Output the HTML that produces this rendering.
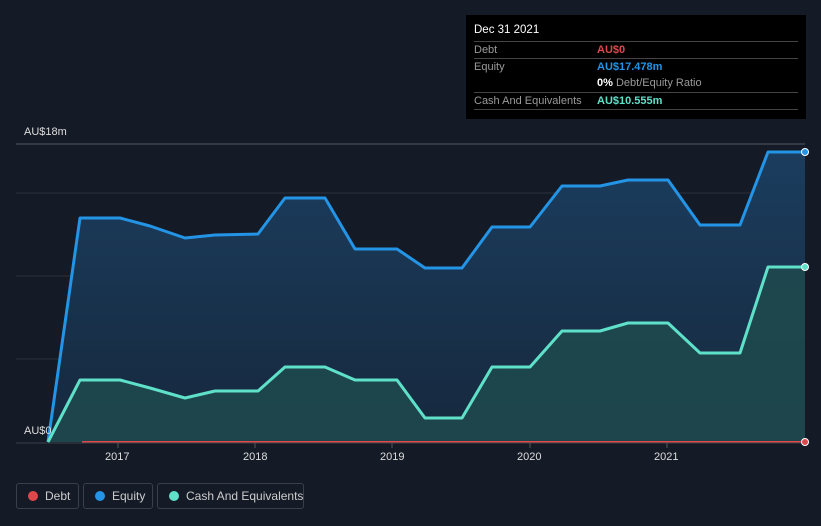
<!DOCTYPE html>
<html><head><style>
body{margin:0;width:821px;height:526px;background:#151b26;font-family:"Liberation Sans",sans-serif;overflow:hidden;position:relative}
.tip{position:absolute;left:466px;top:15px;width:340px;height:104px;background:#000;color:#fff;font-size:11px}
.tip .h{position:absolute;left:8px;top:9px;font-size:11.5px}
.row{position:absolute;left:8px;width:324px;border-top:1px solid #444;height:17px}
.row span{position:absolute;top:2px;white-space:nowrap}
.l{left:0;color:#9a9a9a}.v{left:123px;font-weight:bold}
.leg{position:absolute;top:483px;height:26px;border:1px solid #3a404a;border-radius:3px;color:#ccc;font-size:12px;line-height:24px;box-sizing:border-box;white-space:nowrap}
.leg i{position:absolute;left:11px;top:7px;width:10px;height:10px;border-radius:50%}
.leg span{position:absolute;left:28px}
.ax{position:absolute;color:#ddd;font-size:11px}
</style></head><body>
<svg width="821" height="526" style="position:absolute;left:0;top:0">
<defs>
<linearGradient id="ge" x1="0" y1="0" x2="0" y2="1"><stop offset="0" stop-color="#1b3d5e"/><stop offset="1" stop-color="#16283d"/></linearGradient>
</defs>
<line x1="16" y1="144" x2="805" y2="144" stroke="#555b66"/>
<line x1="16" y1="193" x2="805" y2="193" stroke="#2a313c"/>
<line x1="16" y1="276" x2="805" y2="276" stroke="#2a313c"/>
<line x1="16" y1="359" x2="805" y2="359" stroke="#2a313c"/>
<polygon fill="url(#ge)" points="48,442 80,218 120,218 150,226 185,238 215,235 258,234 285,198 325,198 355,249 397,249 425,268 462,268 492,227 530,227 562,186 600,186 628,180 668,180 700,225 740,225 768,152 805,152 805,442"/>
<polygon fill="#1f4a4e" fill-opacity="0.85" points="48,442 80,380 120,380 150,388 185,398 215,391 258,391 285,367 325,367 355,380 397,380 425,418 462,418 492,367 530,367 562,331 600,331 628,323 668,323 700,353 740,353 768,267 805,267 805,442"/>
<polyline fill="none" stroke="#2394e6" stroke-width="3" stroke-linejoin="round" points="48,442 80,218 120,218 150,226 185,238 215,235 258,234 285,198 325,198 355,249 397,249 425,268 462,268 492,227 530,227 562,186 600,186 628,180 668,180 700,225 740,225 768,152 805,152"/>
<polyline fill="none" stroke="#5fe0c9" stroke-width="3" stroke-linejoin="round" points="48,442 80,380 120,380 150,388 185,398 215,391 258,391 285,367 325,367 355,380 397,380 425,418 462,418 492,367 530,367 562,331 600,331 628,323 668,323 700,353 740,353 768,267 805,267"/>
<line x1="82" y1="442" x2="805" y2="442" stroke="#e0474b" stroke-width="2"/>
<line x1="16" y1="443" x2="805" y2="443" stroke="#3a404a"/>
<g stroke="#555" ><line x1="118" y1="443" x2="118" y2="448"/><line x1="255" y1="443" x2="255" y2="448"/><line x1="392" y1="443" x2="392" y2="448"/><line x1="530" y1="443" x2="530" y2="448"/><line x1="667" y1="443" x2="667" y2="448"/></g>
<circle cx="805" cy="152" r="3.5" fill="#2394e6" stroke="#fff" stroke-width="1"/>
<circle cx="805" cy="267" r="3.5" fill="#5fe0c9" stroke="#fff" stroke-width="1"/>
<circle cx="805" cy="442" r="3.5" fill="#e0474b" stroke="#fff" stroke-width="1"/>
</svg>
<div class="ax" style="left:24px;top:126px">AU$18m</div>
<div class="ax" style="left:24px;top:425px">AU$0</div>
<div class="ax" style="left:105px;top:451px">2017</div>
<div class="ax" style="left:243px;top:451px">2018</div>
<div class="ax" style="left:380px;top:451px">2019</div>
<div class="ax" style="left:517px;top:451px">2020</div>
<div class="ax" style="left:654px;top:451px">2021</div>
<div class="tip">
<div class="h">Dec 31 2021</div>
<div class="row" style="top:26px"><span class="l">Debt</span><span class="v" style="color:#e0474b">AU$0</span></div>
<div class="row" style="top:43px"><span class="l">Equity</span><span class="v" style="color:#2394e6">AU$17.478m</span></div>
<div class="row" style="top:60px;border-top:none"><span class="v" style="color:#fff">0% <b style="font-weight:normal;color:#9a9a9a">Debt/Equity Ratio</b></span></div>
<div class="row" style="top:77px"><span class="l">Cash And Equivalents</span><span class="v" style="color:#5fe0c9">AU$10.555m</span></div>
<div class="row" style="top:94px;height:0"></div>
</div>
<div class="leg" style="left:16px;width:63px"><i style="background:#e0474b"></i><span>Debt</span></div>
<div class="leg" style="left:83px;width:70px"><i style="background:#2394e6"></i><span>Equity</span></div>
<div class="leg" style="left:157px;width:147px"><i style="background:#5fe0c9"></i><span>Cash And Equivalents</span></div>
</body></html>
